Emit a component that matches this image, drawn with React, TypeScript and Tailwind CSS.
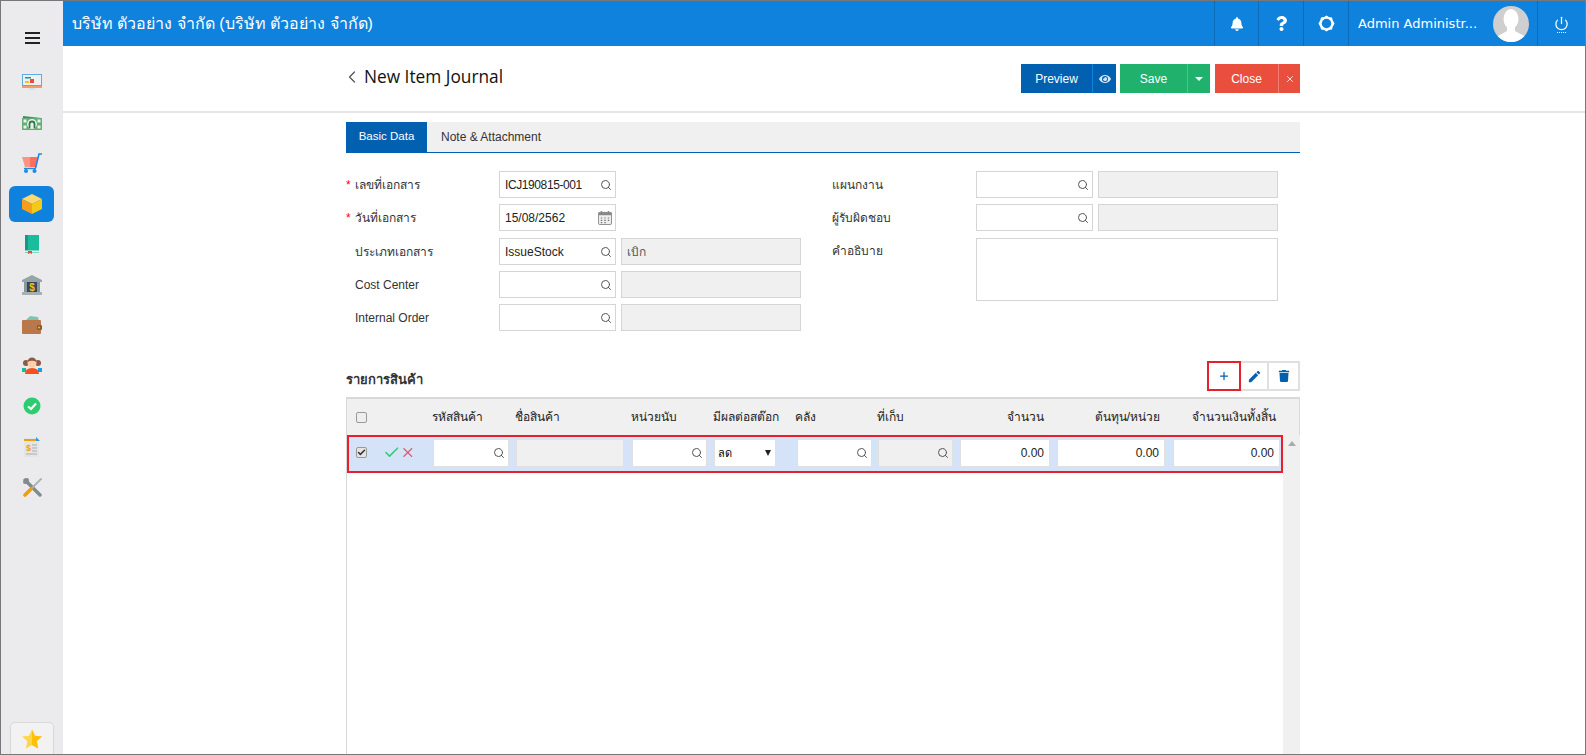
import React from 'react';
import { Power, Search, Check, X, Plus, ChevronLeft } from 'lucide-react';
import { FaBell, FaEye, FaQuestion, FaTrash } from 'react-icons/fa';
import { MdEdit } from 'react-icons/md';

const SB = 'flex h-[40.5px] w-full shrink-0 items-center justify-center';

const MonitorIcon = () => (
  <svg width="20" height="16" viewBox="0 0 20 16">
    <rect x="0" y="0" width="20" height="12" fill="#5dade2" />
    <rect x="1" y="1" width="18" height="10" fill="#ecf0f1" />
    <rect x="3" y="3" width="6" height="1.5" fill="#16a085" />
    <rect x="3" y="7" width="4" height="2" fill="#f1c40f" />
    <rect x="8" y="5" width="4" height="4" fill="#e74c3c" />
    <rect x="0" y="12" width="20" height="2" fill="#f39c6b" />
    <rect x="7" y="14" width="6" height="2" fill="#cfe3e8" />
  </svg>
);

const MoneyIcon = () => (
  <svg width="20" height="15" viewBox="0 0 20 15">
    <path d="M1 1 L19 3 V6 H1Z" fill="#3f8f5b" />
    <rect x="0" y="3" width="20" height="12" fill="#66ad78" />
    <rect x="1.5" y="4.5" width="3" height="3" fill="#e8f3ea" />
    <rect x="15.5" y="4.5" width="3" height="3" fill="#e8f3ea" />
    <rect x="1.5" y="10.5" width="3" height="3" fill="#e8f3ea" />
    <rect x="15.5" y="10.5" width="3" height="3" fill="#e8f3ea" />
    <circle cx="10" cy="9" r="5" fill="#e8f3ea" />
    <path d="M7.5 13 V9 A2.5 2.5 0 0 1 12.5 9 V13" stroke="#2f7d4c" strokeWidth="1.8" fill="none" />
  </svg>
);

const CartIcon = () => (
  <svg width="20" height="20" viewBox="0 0 20 20">
    <path d="M0 4h8v10H3z" fill="#ff9484" />
    <path d="M8 4h8l-2 10H8z" fill="#ff6f5c" />
    <path d="M13.5 15 L17 1 H20" stroke="#1e88e5" strokeWidth="1.6" fill="none" />
    <path d="M2 15.5h12" stroke="#1e88e5" strokeWidth="1.4" />
    <circle cx="4" cy="18" r="2" fill="#1e88e5" />
    <circle cx="12.5" cy="18" r="2" fill="#1e88e5" />
  </svg>
);

const BoxIcon = () => (
  <svg width="20" height="20" viewBox="0 0 20 20">
    <path d="M10 0 L20 5 L10 10 L0 5Z" fill="#ffd970" />
    <path d="M0 5 L10 10 V20 L0 15Z" fill="#f59f1a" />
    <path d="M20 5 L10 10 V20 L20 15Z" fill="#f7c917" />
  </svg>
);

const BookIcon = () => (
  <svg width="16" height="19" viewBox="0 0 16 19">
    <path d="M1 0 H15 V18 H1Z" fill="#1abc9c" />
    <rect x="1" y="0" width="3" height="18" fill="#149a80" />
    <rect x="1" y="15.5" width="14" height="2" fill="#e8f3f0" />
    <path d="M4 16h4v3l-2-1-2 1z" fill="#e74c3c" />
  </svg>
);

const BankIcon = () => (
  <svg width="20" height="20" viewBox="0 0 20 20">
    <path d="M10 0 L20 5 V7 H0 V5Z" fill="#95a5a6" />
    <rect x="2" y="7" width="16" height="10" fill="#8a9899" />
    <rect x="5" y="7" width="10" height="10" fill="#34495e" />
    <text x="10" y="15.5" textAnchor="middle" fontSize="10" fontWeight="700" fill="#f1c40f" fontFamily="'Liberation Sans', sans-serif">$</text>
    <rect x="0" y="17" width="20" height="3" fill="#a5b1b2" />
  </svg>
);

const WalletIcon = () => (
  <svg width="20" height="18" viewBox="0 0 20 18">
    <path d="M3 5 L8 0 L16 1 L17 5Z" fill="#7fc4b0" />
    <rect x="0" y="4" width="19" height="14" rx="1" fill="#b9784c" />
    <rect x="15" y="9" width="5" height="5" rx="1" fill="#8f5a36" />
    <circle cx="17" cy="11.5" r="1" fill="#f1c40f" />
  </svg>
);

const PeopleIcon = () => (
  <svg width="20" height="18" viewBox="0 0 20 18">
    <circle cx="4" cy="6" r="3" fill="#8d5a44" />
    <circle cx="16" cy="6" r="3" fill="#8d5a44" />
    <rect x="0" y="11" width="4" height="4" fill="#1abc9c" />
    <rect x="16" y="11" width="4" height="4" fill="#1e9be5" />
    <path d="M3 17 Q3 11 10 11 Q17 11 17 17Z" fill="#f4511e" />
    <circle cx="10" cy="6" r="4.5" fill="#fbd0a8" />
    <path d="M5.5 5 Q6 0.5 10 0.5 Q14 0.5 14.5 5 Q10 2.5 5.5 5Z" fill="#8d5a44" />
  </svg>
);

const ApproveIcon = () => (
  <svg width="18" height="18" viewBox="0 0 18 18">
    <circle cx="9" cy="9" r="8.5" fill="#2ecc71" />
    <path d="M5 9.5 L8 12 L13 6.5" stroke="#fff" strokeWidth="2.2" fill="none" />
  </svg>
);

const ReportIcon = () => (
  <svg width="18" height="20" viewBox="0 0 18 20">
    <rect x="1" y="1" width="15" height="19" fill="#e4e6e6" />
    <rect x="1" y="2" width="13" height="2" fill="#f39c12" />
    <path d="M13 0 L17 4 H13Z" fill="#3498db" />
    <text x="5.5" y="14" textAnchor="middle" fontSize="9" fontWeight="700" fill="#f39c12" fontFamily="'Liberation Sans', sans-serif">$</text>
    <path d="M9 8h5M9 11h5M9 14h5M3 17h11" stroke="#a6acaf" strokeWidth="1" />
  </svg>
);

const ToolsIcon = () => (
  <svg width="19" height="19" viewBox="0 0 19 19">
    <path d="M4 4 L17 17" stroke="#7f8c8d" strokeWidth="3.4" strokeLinecap="round" />
    <path d="M3 0 A4 4 0 0 0 0 3 L3.5 3.5 Z M0.5 1 L0 5 A4 4 0 0 0 5 5 A4 4 0 0 0 5 0 Z" fill="#7f8c8d" />
    <path d="M18.5 .5 L9 10" stroke="#a5b1b2" strokeWidth="1.8" />
    <path d="M8 11 L2 17" stroke="#f39c12" strokeWidth="3.6" strokeLinecap="round" />
  </svg>
);

const StarIcon = () => (
  <svg width="20" height="20" viewBox="0 0 22 21">
    <path d="M11 0 L14.2 7 L22 7.8 L16.2 13 L17.8 21 L11 17 L4.2 21 L5.8 13 L0 7.8 L7.8 7Z" fill="#ffd54f" />
    <path d="M11 0 L14.2 7 L22 7.8 L16.2 13 L17.8 21 L11 17Z" fill="#ffc107" />
  </svg>
);

const GearIcon = () => (
  <svg width="17" height="17" viewBox="0 0 18 18">
    <path d="M9 0.5 L11.5 2.2 L14.8 2.6 L15.6 5.6 L17.5 9 L15.6 12.4 L14.8 15.4 L11.5 15.8 L9 17.5 L6.5 15.8 L3.2 15.4 L2.4 12.4 L.5 9 L2.4 5.6 L3.2 2.6 L6.5 2.2Z" fill="#fff" />
    <circle cx="9" cy="9" r="5" fill="#0f82de" />
  </svg>
);

const CalendarIcon = () => (
  <svg width="14" height="14" viewBox="0 0 15 15">
    <rect x="0.5" y="1.5" width="14" height="13" rx="1.5" fill="#eeeeee" stroke="#888" />
    <rect x="0.5" y="1.5" width="14" height="3" fill="#888" />
    <rect x="3" y="0" width="1.5" height="3" fill="#888" />
    <rect x="10.5" y="0" width="1.5" height="3" fill="#888" />
    <path d="M3 7.5h1.5M6.75 7.5h1.5M10.5 7.5h1.5M3 10h1.5M6.75 10h1.5M10.5 10h1.5M3 12.5h1.5M6.75 12.5h1.5" stroke="#777" strokeWidth="1.2" />
  </svg>
);

const Avatar = () => (
  <svg width="36" height="36" viewBox="0 0 36 36">
    <defs>
      <clipPath id="avatarClip">
        <circle cx="18" cy="18" r="18" />
      </clipPath>
    </defs>
    <circle cx="18" cy="18" r="18" fill="#cfcfcf" />
    <g clipPath="url(#avatarClip)" fill="#fff">
      <ellipse cx="18" cy="13" rx="7.5" ry="10" />
      <path d="M14 20 L14 25 L3 31 L3 36 L33 36 L33 31 L22 25 L22 20Z" />
    </g>
  </svg>
);

const Field = ({ value = '', tight = false, calendar = false }: { value?: string; tight?: boolean; calendar?: boolean }) => (
  <div className="flex h-[27px] w-[117px] items-center justify-between border border-[#d5d5d5] bg-white pl-[5px] pr-[3px] text-[12px] text-[#222]">
    <span className={tight ? 'tracking-[-0.4px]' : ''}>{value}</span>
    {calendar ? <CalendarIcon /> : <Search size={12} className="text-[#555]" />}
  </div>
);

const ReadOnly = ({ value = '' }: { value?: string }) => (
  <div className="flex h-[27px] w-[180px] items-center border border-[#d5d5d5] bg-[#f0f0f0] pl-[5px] text-[12px] text-[#555]">{value}</div>
);

const Label = ({ text, required = false }: { text: string; required?: boolean }) => (
  <div className="flex w-[153px] items-center text-[12px] text-[#333]">
    <span className="w-[9px] text-[#f00]">{required ? '*' : ''}</span>
    <span>{text}</span>
  </div>
);

const RightLabel = ({ text, top = false }: { text: string; top?: boolean }) => (
  <div className={`flex w-[145px] pl-[1px] text-[12px] text-[#333] ${top ? 'items-start pt-[4px]' : 'items-center'}`}>{text}</div>
);

const CellInput = ({ width, gray = false, icon = true }: { width: string; gray?: boolean; icon?: boolean }) => (
  <div className={`flex h-[28px] ${width} shrink-0 items-center justify-end border border-[#e0e0e0] pr-[3px] ${gray ? 'bg-[#f0f0f0]' : 'bg-white'}`}>
    {icon && <Search size={12} className="text-[#555]" />}
  </div>
);

const Amount = ({ width }: { width: string }) => (
  <div className={`flex h-[28px] ${width} shrink-0 items-center justify-end border border-[#e0e0e0] bg-white pr-[5px] text-[12px] text-[#222]`}>0.00</div>
);

const iconsTop = [MonitorIcon, MoneyIcon, CartIcon];
const iconsBottom = [BookIcon, BankIcon, WalletIcon, PeopleIcon, ApproveIcon, ReportIcon, ToolsIcon];

export default function App() {
  return (
    <div className="h-[755px] w-[1586px] overflow-hidden bg-white font-['Liberation_Sans','DejaVu_Sans',sans-serif]">
      <div className="flex h-[755px] w-[1586px] border border-[#777]">
        {/* Sidebar */}
        <aside className="flex w-[62px] shrink-0 flex-col items-center bg-[#ebebee]">
          <div className="flex h-[61px] w-full shrink-0 items-end justify-center pb-[18px]">
            <div className="flex w-[15px] flex-col gap-[3px]">
              <div className="h-[2px] bg-[#222]" />
              <div className="h-[2px] bg-[#222]" />
              <div className="h-[2px] bg-[#222]" />
            </div>
          </div>
          {iconsTop.map((Icon, i) => (
            <div key={i} className={SB}><Icon /></div>
          ))}
          <div className={SB}>
            <div className="-ml-[1px] flex h-[36px] w-[45px] items-center justify-center rounded-[6px] bg-[#0f82de]"><BoxIcon /></div>
          </div>
          {iconsBottom.map((Icon, i) => (
            <div key={i} className={SB}><Icon /></div>
          ))}
          <div className="mt-auto flex h-[32px] w-[44px] items-center justify-center rounded-t-[5px] border border-b-0 border-[#d9d9d9] bg-[#f2f2f2]">
            <StarIcon />
          </div>
        </aside>

        <div className="flex min-w-0 flex-1 flex-col">
          {/* Top bar */}
          <header className="flex h-[45px] shrink-0 items-center bg-[#0f82de] text-white">
            <div className="flex-1 pl-[9px] text-[16px]">บริษัท ตัวอย่าง จำกัด (บริษัท ตัวอย่าง จำกัด)</div>
            <div className="flex h-full w-[44px] items-center justify-center border-l border-[#0b6cbb]"><FaBell size={14} /></div>
            <div className="flex h-full w-[45px] items-center justify-center border-l border-[#0b6cbb]"><FaQuestion size={15} /></div>
            <div className="flex h-full w-[45px] items-center justify-center border-l border-[#0b6cbb]"><GearIcon /></div>
            <div className="flex h-full w-[189px] items-center justify-between border-l border-[#0b6cbb] pl-[9px] pr-[8px] font-['DejaVu_Sans',sans-serif] text-[13px]">
              <span>Admin Administr...</span>
              <Avatar />
            </div>
            <div className="flex h-full w-[48px] flex-col items-center justify-center border-l border-[#0b6cbb] pt-[2px]">
              <Power size={15} />
              <div className="mt-[1px] w-[9px] border-t border-dotted border-white" />
            </div>
          </header>

          {/* Page title */}
          <div className="flex h-[67px] shrink-0 items-center justify-between border-b-2 border-[#e6e6e6] pl-[283px] pr-[285px]">
            <div className="flex items-center gap-[2px] pb-[4px] text-[17.3px] text-[#111]">
              <ChevronLeft size={20} strokeWidth={1.5} className="-ml-[4px] text-[#555]" />
              <span className="font-['Open_Sans',sans-serif]">New Item Journal</span>
            </div>
            <div className="flex gap-[4px] text-[12px] text-white">
              <div className="flex h-[29px] w-[95px] bg-[#0260b0]">
                <div className="flex flex-1 items-center justify-center">Preview</div>
                <div className="flex w-[24px] items-center justify-center border-l border-[#0f82de]"><FaEye size={12} className="text-[#d6e8f7]" /></div>
              </div>
              <div className="flex h-[29px] w-[90px] bg-[#20b16c]">
                <div className="flex flex-1 items-center justify-center">Save</div>
                <div className="flex w-[23px] items-center justify-center border-l border-[#36cf85]">
                  <span className="h-0 w-0 border-x-[4px] border-t-[4px] border-x-transparent border-t-white" />
                </div>
              </div>
              <div className="ml-[1px] flex h-[29px] w-[85px] bg-[#ea4f3d]">
                <div className="flex flex-1 items-center justify-center">Close</div>
                <div className="flex w-[22px] items-center justify-center border-l border-[#f47c6e]"><X size={10} /></div>
              </div>
            </div>
          </div>

          {/* Content */}
          <main className="ml-[283px] flex w-[954px] flex-1 flex-col">
            <div className="mt-[9px] flex h-[31px] shrink-0 border-b border-[#0260b0] bg-[#f0f0f0] text-[11.5px]">
              <div className="flex w-[81px] items-center justify-center bg-[#0260b0] text-white">Basic Data</div>
              <div className="flex w-[128px] items-center justify-center whitespace-nowrap text-[12px] text-[#333]">Note &amp; Attachment</div>
            </div>

            <div className="mt-[18px] flex shrink-0">
              <div className="flex w-[485px] flex-col gap-[6px]">
                <div className="flex"><Label text="เลขที่เอกสาร" required /><Field value="ICJ190815-001" tight /></div>
                <div className="flex"><Label text="วันที่เอกสาร" required /><Field value="15/08/2562" calendar /></div>
                <div className="mt-[1px] flex gap-[5px]"><div className="flex"><Label text="ประเภทเอกสาร" /><Field value="IssueStock" /></div><ReadOnly value="เบิก" /></div>
                <div className="flex gap-[5px]"><div className="flex"><Label text="Cost Center" /><Field /></div><ReadOnly /></div>
                <div className="flex gap-[5px]"><div className="flex"><Label text="Internal Order" /><Field /></div><ReadOnly /></div>
              </div>
              <div className="flex flex-col gap-[6px]">
                <div className="flex gap-[5px]"><div className="flex"><RightLabel text="แผนกงาน" /><Field /></div><ReadOnly /></div>
                <div className="flex gap-[5px]"><div className="flex"><RightLabel text="ผู้รับผิดชอบ" /><Field /></div><ReadOnly /></div>
                <div className="mt-[1px] flex"><RightLabel text="คำอธิบาย" top /><div className="h-[63px] w-[302px] border border-[#d5d5d5] bg-white" /></div>
              </div>
            </div>

            <div className="mt-[30px] flex shrink-0 items-center justify-between">
              <div className="pt-[7px] text-[13px] font-bold text-[#333]">รายการสินค้า</div>
              <div className="flex">
                <div className="flex h-[30px] w-[34px] items-center justify-center border-2 border-[#e8202c] text-[#0260b0]"><Plus size={12} strokeWidth={2.5} /></div>
                <div className="flex h-[30px] w-[28px] items-center justify-center border-y-2 border-r-2 border-[#e0e0e0] text-[#0260b0]"><MdEdit size={15} /></div>
                <div className="flex h-[30px] w-[31px] items-center justify-center border-y-2 border-r-2 border-[#e0e0e0] text-[#0260b0]"><FaTrash size={12} /></div>
              </div>
            </div>

            {/* Grid */}
            <div className="mt-[6px] flex min-h-0 flex-1 flex-col border-x border-t-2 border-[#d8d8d8]">
              <div className="flex h-[36px] shrink-0 items-center bg-[#f0f0f0] text-[12px] text-[#222]">
                <div className="ml-[9px] h-[11px] w-[11px] rounded-[2px] border border-[#999] bg-[#eee]" />
                <span className="ml-[65px] w-[83px]">รหัสสินค้า</span>
                <span className="w-[116px]">ชื่อสินค้า</span>
                <span className="w-[82px]">หน่วยนับ</span>
                <span className="w-[82px]">มีผลต่อสต๊อก</span>
                <span className="w-[82px]">คลัง</span>
                <span className="w-[70px]">ที่เก็บ</span>
                <span className="w-[97px] text-right">จำนวน</span>
                <span className="w-[116px] text-right">ต้นทุน/หน่วย</span>
                <span className="w-[116px] text-right">จำนวนเงินทั้งสิ้น</span>
              </div>
              <div className="flex min-h-0 flex-1">
                <div className="flex-1">
                  <div className="flex h-[38px] w-[936px] items-start border-2 border-[#e8202c] bg-[#d4e3f8] pt-[2px] text-[12px]">
                    <div className="ml-[7px] mt-[8px] flex h-[11px] w-[11px] shrink-0 items-center justify-center rounded-[2px] border border-[#999] bg-[#e4e4e4]"><Check size={9} strokeWidth={4} className="text-[#333]" /></div>
                    <div className="ml-[16px] mt-[4px] flex w-[33px] shrink-0 items-center">
                      <Check size={19} className="text-[#2ecc71]" />
                      <X size={17} className="text-[#e74c5c]" />
                    </div>
                    <div className="ml-[17px]"><CellInput width="w-[76px]" /></div>
                    <div className="ml-[7px]"><CellInput width="w-[108px]" gray icon={false} /></div>
                    <div className="ml-[8px]"><CellInput width="w-[75px]" /></div>
                    <div className="ml-[7px] flex h-[28px] w-[62px] shrink-0 items-center justify-between border border-[#e0e0e0] bg-white pl-[3px] pr-[4px] text-[11px]">
                      <span>ลด</span>
                      <span className="h-0 w-0 border-x-[3px] border-t-[6px] border-x-transparent border-t-[#222]" />
                    </div>
                    <div className="ml-[21px]"><CellInput width="w-[75px]" /></div>
                    <div className="ml-[6px]"><CellInput width="w-[75px]" gray /></div>
                    <div className="ml-[7px]"><Amount width="w-[90px]" /></div>
                    <div className="ml-[7px]"><Amount width="w-[108px]" /></div>
                    <div className="ml-[8px]"><Amount width="w-[107px]" /></div>
                  </div>
                </div>
                <div className="flex w-[17px] shrink-0 justify-center bg-[#f0f0f0] pt-[6px]">
                  <span className="h-0 w-0 border-x-[4px] border-b-[5px] border-x-transparent border-b-[#aaa]" />
                </div>
              </div>
            </div>
          </main>
        </div>
      </div>
    </div>
  );
}
